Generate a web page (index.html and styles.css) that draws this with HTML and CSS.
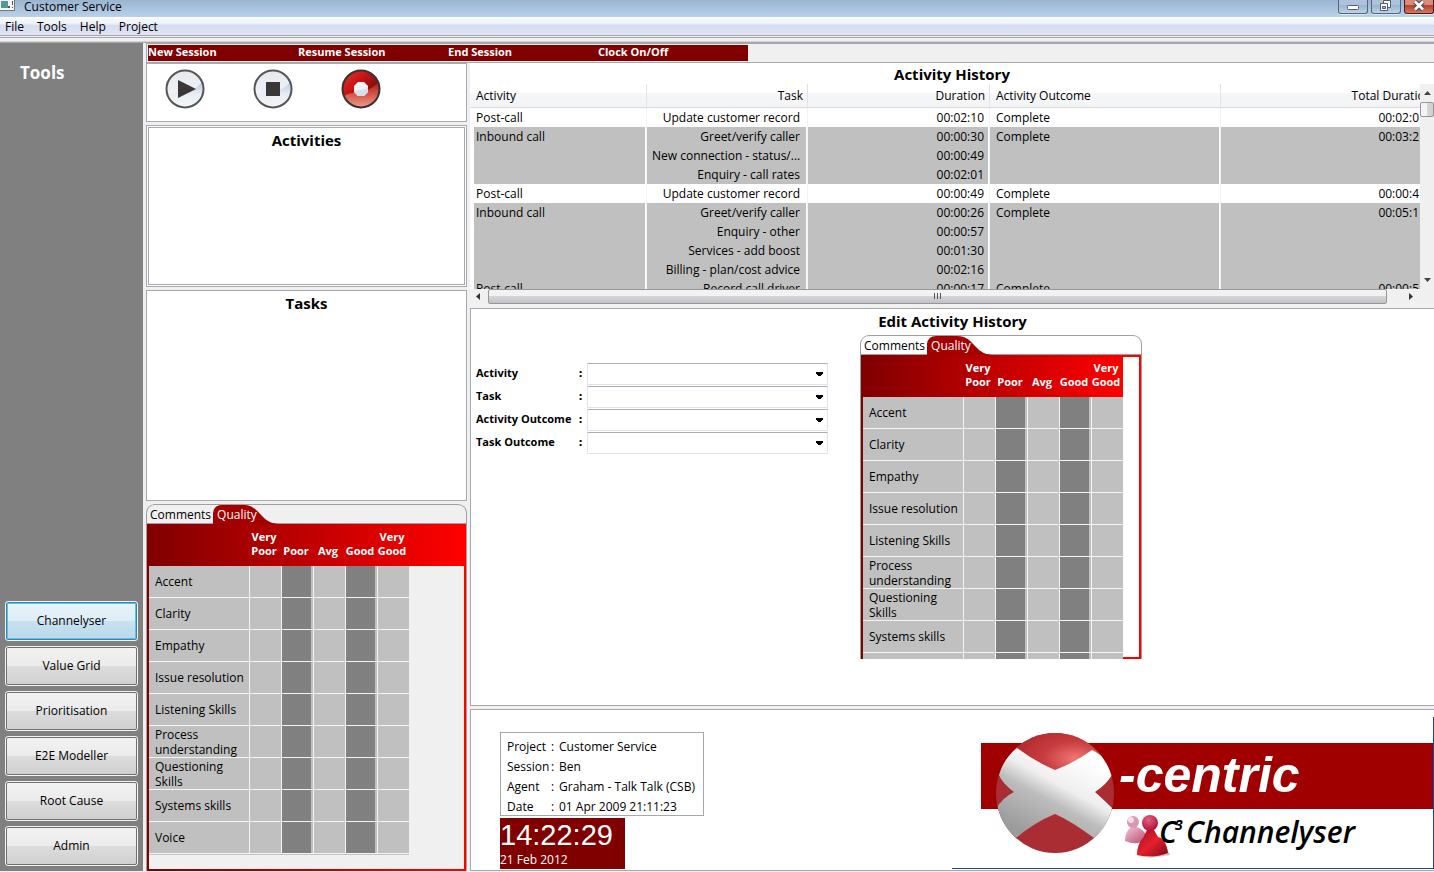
FILE: index.html
```html
<!DOCTYPE html>
<html lang="en">
<head>
<meta charset="utf-8">
<title>Customer Service</title>
<link rel="stylesheet" href="styles.css">
</head>
<body>
<header class="titlebar">
  <svg class="app-icon" width="15" height="12" viewBox="0 0 15 12" aria-hidden="true">
    <path d="M0 0h15v11H0z" fill="#777"/><path d="M0 0h14v10H0z" fill="#f4f4f4"/>
    <path d="M1 1h7v7H1z" fill="#5595a8"/><path d="M2 4h5v4H2z" fill="#4fa080"/>
    <path d="M8 6h2v2H8zM12 1h1v4h-1zM12 7h1v1h-1z" fill="#555"/>
  </svg>
  <span class="title">Customer Service</span>
  <div class="window-buttons">
    <button class="win-btn" aria-label="Minimise"><svg width="30" height="14" viewBox="0 0 30 14"><rect x="9.500" y="5.500" width="11" height="4" rx="1" fill="#fff" stroke="#555b6b"/></svg></button>
    <button class="win-btn" aria-label="Restore"><svg width="30" height="14" viewBox="0 0 30 14"><path d="M12.500 .5h7v7h-7z" fill="#fff" stroke="#555b6b"/><path d="M9.500 3.500h7v7h-7z" fill="#fff" stroke="#555b6b"/><path d="M11.500 6.500h3v2h-3z" fill="#9fb9d3" stroke="#555b6b"/></svg></button>
    <button class="win-btn close" aria-label="Close"><svg width="30" height="14" viewBox="0 0 30 14"><path d="M11 1.500l8 8M19 1.500l-8 8" stroke="#4d4a5c" stroke-width="5"/><path d="M11 1.500l8 8M19 1.500l-8 8" stroke="#fff" stroke-width="2.600"/></svg></button>
  </div>
</header>
<nav class="menubar">
  <button>File</button><button>Tools</button><button>Help</button><button>Project</button>
</nav>
<div class="divider"></div>
<div class="workspace">
  <aside class="sidebar">
    <h2>Tools</h2>
    <div class="tool-buttons">
      <button class="active">Channelyser</button>
      <button>Value Grid</button>
      <button>Prioritisation</button>
      <button>E2E Modeller</button>
      <button>Root Cause</button>
      <button>Admin</button>
    </div>
  </aside>
  <main>
    <div class="session-bar">
      <div class="session-labels"><span>New Session</span><span>Resume Session</span><span>End Session</span><span>Clock On/Off</span></div>
    </div>
    <div class="columns">
      <div class="left">
        <section class="panel controls">
          <button aria-label="Play"><svg width="40" height="40" viewBox="0 0 40 40">
            <defs><linearGradient id="glass" x1="0" y1="0" x2="0" y2="1"><stop offset="0" stop-color="#e6e9ed"/><stop offset="1" stop-color="#f3f6f9"/></linearGradient>
            <linearGradient id="shade" x1="0" y1="0" x2="0" y2="1"><stop offset="0" stop-color="#b9cbdc"/><stop offset=".5" stop-color="#e8eef4"/><stop offset="1" stop-color="#f2f6f9"/></linearGradient></defs>
            <circle cx="20" cy="20" r="18.500" fill="url(#glass)"/>
            <path d="M3 27C12 21 28 26 37 13A18 18 0 0 1 22 38C12 38 5 34 3 27z" fill="url(#shade)"/>
            <circle cx="20" cy="20" r="18.500" fill="none" stroke="#555" stroke-width="2"/>
            <path d="M13 11v18l18-9z" fill="#3a3737"/></svg></button>
          <button aria-label="Stop"><svg width="40" height="40" viewBox="0 0 40 40">
            <circle cx="20" cy="20" r="18.500" fill="url(#glass)"/>
            <path d="M3 27C12 21 28 26 37 13A18 18 0 0 1 22 38C12 38 5 34 3 27z" fill="url(#shade)"/>
            <circle cx="20" cy="20" r="18.500" fill="none" stroke="#555" stroke-width="2"/>
            <path d="M13 13h14v14H13z" fill="#3a3737"/></svg></button>
          <button aria-label="Clock on or off"><svg width="40" height="40" viewBox="0 0 40 40">
            <defs><linearGradient id="red" x1="0" y1="0" x2="1" y2="1"><stop offset="0" stop-color="#dc3a34"/><stop offset=".35" stop-color="#c91414"/><stop offset=".7" stop-color="#7d0d0d"/></linearGradient>
            <linearGradient id="redlow" x1="0" y1="0" x2="0" y2="1"><stop offset="0" stop-color="#b51512"/><stop offset="1" stop-color="#f09a84"/></linearGradient></defs>
            <circle cx="20" cy="20" r="18.500" fill="url(#red)"/>
            <path d="M3 27C12 21 28 26 37 13A18 18 0 0 1 22 38C12 38 5 34 3 27z" fill="url(#redlow)"/>
            <circle cx="20" cy="20" r="18.500" fill="none" stroke="#333" stroke-width="2"/>
            <path d="M17 13h6l4 4v6l-4 4h-6l-4-4v-6z" fill="#f1f3f6"/><path d="M13 22c5-1 10 0 14-4v5l-4 4h-6l-4-4z" fill="#d5dfe9"/></svg></button>
        </section>
        <section class="panel activities"><h3>Activities</h3></section>
        <section class="panel tasks"><h3>Tasks</h3></section>
        <section class="quality session-quality">
          <div class="tabs" role="tablist">
            <svg class="tab-shape" width="70" height="19" viewBox="0 0 70 19" aria-hidden="true"><path d="M0 19V8Q1 0 9 0H30C48 0 46 18 66 19z" fill="#a40000"/></svg>
            <button role="tab" aria-selected="false">Comments</button><button role="tab" aria-selected="true" class="current">Quality</button>
          </div>
          <div class="frame"><div class="frame-inner">
            <table class="ratings">
              <thead><tr><th aria-label="Skill"></th><th>Very<br>Poor</th><th>Poor</th><th>Avg</th><th>Good</th><th>Very<br>Good</th></tr></thead>
              <tbody>
                <tr><th>Accent</th><td></td><td></td><td></td><td></td><td></td></tr>
                <tr><th>Clarity</th><td></td><td></td><td></td><td></td><td></td></tr>
                <tr><th>Empathy</th><td></td><td></td><td></td><td></td><td></td></tr>
                <tr><th>Issue resolution</th><td></td><td></td><td></td><td></td><td></td></tr>
                <tr><th>Listening Skills</th><td></td><td></td><td></td><td></td><td></td></tr>
                <tr><th>Process understanding</th><td></td><td></td><td></td><td></td><td></td></tr>
                <tr><th>Questioning Skills</th><td></td><td></td><td></td><td></td><td></td></tr>
                <tr><th>Systems skills</th><td></td><td></td><td></td><td></td><td></td></tr>
                <tr><th>Voice</th><td></td><td></td><td></td><td></td><td></td></tr>
              </tbody>
            </table>
          </div></div>
        </section>
      </div>
      <div class="right">
        <section class="history">
          <h3>Activity History</h3>
          <div class="grid-area">
            <div class="grid-view">
              <table class="log">
                <colgroup><col class="c-activity"><col class="c-task"><col class="c-duration"><col class="c-outcome"><col class="c-total"></colgroup>
                <thead><tr><th>Activity</th><th>Task</th><th>Duration</th><th>Activity Outcome</th><th>Total Duration</th></tr></thead>
                <tbody>
                  <tr><td>Post-call</td><td>Update customer record</td><td>00:02:10</td><td>Complete</td><td>00:02:0</td></tr>
                  <tr class="alt"><td>Inbound call</td><td>Greet/verify caller</td><td>00:00:30</td><td>Complete</td><td>00:03:2</td></tr>
                  <tr class="alt"><td></td><td>New connection - status/...</td><td>00:00:49</td><td></td><td></td></tr>
                  <tr class="alt"><td></td><td>Enquiry - call rates</td><td>00:02:01</td><td></td><td></td></tr>
                  <tr><td>Post-call</td><td>Update customer record</td><td>00:00:49</td><td>Complete</td><td>00:00:4</td></tr>
                  <tr class="alt"><td>Inbound call</td><td>Greet/verify caller</td><td>00:00:26</td><td>Complete</td><td>00:05:1</td></tr>
                  <tr class="alt"><td></td><td>Enquiry - other</td><td>00:00:57</td><td></td><td></td></tr>
                  <tr class="alt"><td></td><td>Services - add boost</td><td>00:01:30</td><td></td><td></td></tr>
                  <tr class="alt"><td></td><td>Billing - plan/cost advice</td><td>00:02:16</td><td></td><td></td></tr>
                  <tr class="alt"><td>Post-call</td><td>Record call driver</td><td>00:00:17</td><td>Complete</td><td>00:00:5</td></tr>
                </tbody>
              </table>
            </div>
            <div class="vscroll">
              <svg width="14" height="18" viewBox="0 0 14 18"><path d="M4 11l3.500-4 3.500 4z" fill="#444"/></svg>
              <div class="vthumb"></div>
              <svg class="down" width="14" height="18" viewBox="0 0 14 18"><path d="M4 7l3.500 4L11 7z" fill="#444"/></svg>
            </div>
          </div>
          <div class="hscroll">
            <svg width="18" height="15" viewBox="0 0 18 15"><path d="M10 4v7L6 7.500z" fill="#333"/></svg>
            <div class="hthumb"><i></i><i></i><i></i></div>
            <svg class="end" width="47" height="15" viewBox="0 0 47 15"><path d="M22 4v7l4-3.500z" fill="#333"/></svg>
          </div>
        </section>
        <section class="edit">
          <h3>Edit Activity History</h3>
          <div class="edit-body">
            <form class="fields">
              <label for="activity">Activity</label><b>:</b><select id="activity"><option></option></select>
              <label for="task">Task</label><b>:</b><select id="task"><option></option></select>
              <label for="activity-outcome">Activity Outcome</label><b>:</b><select id="activity-outcome"><option></option></select>
              <label for="task-outcome">Task Outcome</label><b>:</b><select id="task-outcome"><option></option></select>
            </form>
            <div class="quality edit-quality">
              <div class="tabs" role="tablist">
                <svg class="tab-shape" width="70" height="19" viewBox="0 0 70 19" aria-hidden="true"><path d="M0 19V8Q1 0 9 0H30C48 0 46 18 66 19z" fill="#a40000"/></svg>
                <button type="button" role="tab" aria-selected="false">Comments</button><button type="button" role="tab" aria-selected="true" class="current">Quality</button>
              </div>
              <div class="frame"><div class="frame-inner">
                <table class="ratings">
                  <thead><tr><th aria-label="Skill"></th><th>Very<br>Poor</th><th>Poor</th><th>Avg</th><th>Good</th><th>Very<br>Good</th></tr></thead>
                  <tbody>
                    <tr><th>Accent</th><td></td><td></td><td></td><td></td><td></td></tr>
                    <tr><th>Clarity</th><td></td><td></td><td></td><td></td><td></td></tr>
                    <tr><th>Empathy</th><td></td><td></td><td></td><td></td><td></td></tr>
                    <tr><th>Issue resolution</th><td></td><td></td><td></td><td></td><td></td></tr>
                    <tr><th>Listening Skills</th><td></td><td></td><td></td><td></td><td></td></tr>
                    <tr><th>Process understanding</th><td></td><td></td><td></td><td></td><td></td></tr>
                    <tr><th>Questioning Skills</th><td></td><td></td><td></td><td></td><td></td></tr>
                    <tr><th>Systems skills</th><td></td><td></td><td></td><td></td><td></td></tr>
                    <tr><th></th><td></td><td></td><td></td><td></td><td></td></tr>
                  </tbody>
                </table>
              </div></div>
            </div>
          </div>
        </section>
        <section class="status">
          <div class="status-info">
            <dl class="info">
              <dt>Project</dt><dd>:</dd><dd>Customer Service</dd>
              <dt>Session</dt><dd>:</dd><dd>Ben</dd>
              <dt>Agent</dt><dd>:</dd><dd>Graham - Talk Talk (CSB)</dd>
              <dt>Date</dt><dd>:</dd><dd>01 Apr 2009 21:11:23</dd>
            </dl>
            <div class="clock"><time class="now">14:22:29</time><span>21 Feb 2012</span></div>
          </div>
          <svg class="logo" width="482" height="152" viewBox="0 0 482 152" role="img" aria-label="X-centric C3 Channelyser">
            <defs>
              <clipPath id="ball"><ellipse cx="103" cy="76" rx="59" ry="60"/></clipPath>
              <linearGradient id="cross" x1=".2" y1=".9" x2=".75" y2=".1"><stop offset="0" stop-color="#9c9c9c"/><stop offset=".42" stop-color="#bdbdbd"/><stop offset=".62" stop-color="#efefef"/><stop offset="1" stop-color="#fff"/></linearGradient>
              <radialGradient id="top" cx=".7" cy=".65" r=".7"><stop offset="0" stop-color="#f07772"/><stop offset=".5" stop-color="#c83c40"/><stop offset="1" stop-color="#b02a30"/></radialGradient>
              <linearGradient id="p1" x1="0" y1="0" x2="1" y2="1"><stop offset="0" stop-color="#f4c6d6"/><stop offset="1" stop-color="#b4446b"/></linearGradient>
              <linearGradient id="p2" x1="0" y1="0" x2="1" y2="1"><stop offset="0" stop-color="#a30d2c"/><stop offset=".5" stop-color="#e5202b"/><stop offset="1" stop-color="#7c0618"/></linearGradient>
              <radialGradient id="head" cx=".4" cy=".3" r=".8"><stop offset="0" stop-color="#e45f83"/><stop offset="1" stop-color="#a60a2e"/></radialGradient>
            </defs>
            <path d="M29 26h453v66H29z" fill="#a00000"/>
            <g clip-path="url(#ball)">
              <path d="M40 10h130v130H40z" fill="#a92d33"/>
              <path d="M60 10h90v48H60z" fill="url(#top)"/>
              <path d="M65 31Q84 45 103 53Q124 45 140 33Q156 40 160 58Q154 68 143 75Q153 84 160 91Q158 111 142 121Q119 104 103 97Q83 105 64 121Q46 112 44 92Q50 81 62 75Q50 66 47 58Q51 42 65 31z" fill="url(#cross)"/>
            </g>
            <text class="logo-brand" x="167" y="75">-centric</text>
            <g>
              <path d="M173 124c0-6 2-11 6-14h5c6 1 10 6 12 13l-10 3q-6 1-13-2z" fill="url(#p1)"/><circle cx="181" cy="105" r="6" fill="#d998b2"/><circle cx="179" cy="103" r="3" fill="#f7dde6"/>
              <path d="M196 141l22-3-3-6z" fill="#d9b4b4"/>
              <path d="M185 138c0-8 3-14 6-17l4-8h7l4 7c6 1 9 8 10 16q-16 6-31 2z" fill="url(#p2)"/><circle cx="198" cy="106" r="8" fill="url(#head)"/>
            </g>
            <text class="logo-product" x="207" y="126">C</text>
            <text class="logo-super" x="223" y="113">3</text>
            <text class="logo-product" x="234" y="126">Channelyser</text>
            <path d="M0 151.500H482M481.500 0v152" stroke="#1647a0" fill="none"/>
          </svg>
        </section>
      </div>
    </div>
  </main>
</div>
</body>
</html>
```
FILE: styles.css
```css
* { box-sizing: border-box; }
body {
  margin: 0; height: 100vh; display: flex; flex-direction: column; padding-bottom: 1px;
  background: #f0f0f0; color: #000; overflow: hidden;
  font: 12px/15px "Open Sans", "Noto Sans", sans-serif;
}
button { font: inherit; color: inherit; border: 0; background: none; padding: 0; margin: 0; }
h2, h3 { margin: 0; }
svg { display: block; flex: none; }

.titlebar { height: 17px; flex: none; display: flex; align-items: flex-start; background: linear-gradient(#9ab5d1, #b9d1ea); }
.title { margin-left: 9px; line-height: 13px; flex: 1; }
.window-buttons { display: flex; gap: 3px; }
.win-btn { width: 30px; height: 14px; border: 1px solid #53657d; border-top: 0; border-radius: 0 0 3px 3px; background: linear-gradient(#adc3dc 40%, #98b4d0 40%, #bcd2e8); box-shadow: 0 1px 0 #dce8f4; overflow: hidden; }
.win-btn svg { margin-left: -1px; }
.win-btn.close { background: linear-gradient(#d98c7c 40%, #b8402a 40%, #d4775c); border-color: #4c1b17; }

.menubar { height: 18px; flex: none; display: flex; gap: 13px; padding: 0 5px; background: linear-gradient(#fdfdff, #eceffa 40%, #d5dcef 45%, #e0e5f5); }
.divider { height: 8px; flex: none; border-top: 1px solid #a5a8ad; border-bottom: 1px solid #a5a8ad; background: linear-gradient(#f0f0f0 1px, #a5a8ad 1px, #a5a8ad 2px, #f0f0f0 2px, #f0f0f0 5px, #a5a8ad 5px, #fff 6px); }

.workspace { flex: 1; min-height: 0; display: flex; }
.sidebar { width: 143px; flex: none; background: #808080; display: flex; flex-direction: column; justify-content: space-between; padding: 20px 5px 5px; }
.sidebar h2 { color: #fff; font-size: 17px; line-height: 20px; padding-left: 15px; }
.tool-buttons { display: flex; flex-direction: column; gap: 5px; width: 133px; }
.tool-buttons button { height: 40px; padding-bottom: 2px; border: 1px solid #f4f4f4; outline: 1px solid #707070; outline-offset: -2px; border-radius: 3px; background: linear-gradient(#f2f2f2, #ebebeb 50%, #dddddd 50%, #cfcfcf); }
.tool-buttons .active { outline: 0; background: linear-gradient(#eaf4fb, #dcedf6 50%, #c8e1ee 50%, #b9d9e9); box-shadow: inset 0 0 0 1px #3c7fb1, inset 0 0 0 2px #48c8f4; }

main { flex: 1; min-width: 0; padding-left: 3px; display: flex; flex-direction: column; }
.session-bar { height: 20px; flex: none; border: 1px solid #a5a8ad; border-right: 0; padding: 1px; }
.session-labels { width: 600px; height: 16px; background: #800000; color: #fff; font-weight: 700; font-size: 11px; line-height: 14px; display: grid; grid-template-columns: repeat(4, 1fr); }
.columns { flex: 1; min-height: 0; display: flex; gap: 3px; }
.left { width: 321px; flex: none; display: flex; flex-direction: column; gap: 3px; }
.right { flex: 1; min-width: 0; display: flex; flex-direction: column; gap: 3px; }
.panel { background: #fff; border: 1px solid #a5a8ad; flex: none; }
h3 { text-align: center; font-size: 15px; line-height: 20px; }
.controls { height: 59px; display: flex; gap: 48px; padding: 5px 18px; align-items: flex-start; }
.activities { height: 162px; border: 3px double #a5a8ad; padding-top: 2px; }
.tasks { height: 211px; padding-top: 2px; }

.quality { display: flex; flex-direction: column; border: 1px solid #a0a0a0; border-bottom: 0; border-radius: 9px 9px 0 0; min-height: 0; }
.session-quality { flex: 1; }
.tabs { height: 19px; flex: none; display: flex; gap: 6px; padding-left: 3px; position: relative; border-bottom: 1px solid #a0a0a0; }
.tab-shape { position: absolute; left: 66px; top: 0; }
.tabs button { position: relative; line-height: 19px; height: 19px; }
.tabs .current { color: #fff; }
.frame { flex: 1; min-height: 0; padding: 2px; background: linear-gradient(90deg, #800000, #f00); display: flex; overflow: hidden; }
.frame-inner { flex: 1; min-width: 0; background: linear-gradient(90deg, #800000, #f00) 0 0 / 100% 40px no-repeat #f0f0f0; }
.ratings { width: 260px; table-layout: fixed; border-collapse: separate; border-spacing: 0; border-bottom: 1px solid #c0c0c0; }
.ratings thead th { height: 40px; padding: 0 2px 8px 0; vertical-align: bottom; color: #fff; font-size: 11px; line-height: 14px; width: 32px; white-space: nowrap; }
.ratings thead th:first-child { width: 100px; }
.ratings tbody th { height: 32px; padding: 0 5px 0 6px; text-align: left; font-weight: 400; line-height: 15px; background: #c0c0c0; border-bottom: 1px solid #f4f4f4; }
.ratings td { padding: 0; background: #c0c0c0; border-left: 1px solid #f4f4f4; border-bottom: 1px solid #f4f4f4; }
.ratings td:nth-child(odd) { background: linear-gradient(90deg, #808080 29px, #c0c0c0 29px); }

.history { height: 242px; flex: none; background: #fff; display: flex; flex-direction: column; padding-top: 1px; }
.history h3 { height: 20px; }
.grid-area { flex: 1; min-height: 0; display: flex; }
.grid-view { flex: 1; min-width: 0; overflow: hidden; }
.log { width: 100%; min-width: 967px; table-layout: fixed; border-collapse: separate; border-spacing: 0; }
.c-activity { width: 177px; } .c-task { width: 161px; } .c-duration { width: 182px; } .c-outcome { width: 231px; } .c-total { width: 216px; }
.log th { height: 24px; padding: 0 4px 0 6px; font-weight: 400; text-align: right; background: linear-gradient(#fff 40%, #f5f6f8 40%, #f2f4f6); border-right: 1px solid #e2e4e8; border-bottom: 1px solid #d8d9db; }
.log td { height: 19px; padding: 0 5px 0 5px; text-align: right; white-space: nowrap; line-height: 18px; border-right: 1px solid #edf4fd; background-clip: padding-box; }
.log th:first-child, .log td:first-child, .log th:nth-child(4), .log td:nth-child(4) { text-align: left; }
.log td:first-child, .log td:nth-child(4) { padding-left: 6px; }
.log td:last-child { padding-right: 17px; }
.log .alt td { background-color: #c0c0c0; box-shadow: inset -1px 0 #fff; }
.log .alt td:first-child { box-shadow: inset 4px 0 #fff, inset -1px 0 #fff; }
.log td:nth-child(2) { padding-right: 7px; }
.vscroll { width: 14px; flex: none; background: #f0f0f0; display: flex; flex-direction: column; }
.vthumb { height: 15px; border: 1px solid #979797; border-radius: 2px; background: linear-gradient(90deg, #f4f4f4 50%, #d8d8d8 50%, #cfcfcf); }
.down { margin-top: auto; }
.hscroll { height: 16px; flex: none; background: #f0f0f0; display: flex; }
.hthumb { flex: 1; height: 15px; border: 1px solid #979797; border-radius: 2px; background: linear-gradient(#f2f2f2 50%, #d5d5d8 50%, #c2c2c6); display: flex; justify-content: center; gap: 2px; padding-top: 3px; }
.hthumb i { width: 1px; height: 6px; background: #555; }

.edit { flex: 1; min-height: 0; background: #fff; border: 1px solid #a5a8ad; border-right: 0; padding-top: 2px; }
.edit h3 { height: 24px; }
.edit-body { display: flex; gap: 32px; padding-left: 5px; align-items: flex-start; }
.fields { width: 352px; flex: none; margin-top: 28px; display: grid; grid-template-columns: 103px 8px 1fr; row-gap: 1px; align-items: center; font-size: 11px; font-weight: 700; line-height: 14px; }
.fields label, .fields b { white-space: nowrap; padding-bottom: 2px; }
.fields select {
  height: 22px; border: 1px solid #e2e3ea; border-top-color: #abadb3; border-radius: 1px; appearance: none;
  background:
    linear-gradient(#000, #000) right 4px top 8px / 7px 1px no-repeat,
    linear-gradient(#000, #000) right 4px top 9px / 7px 1px no-repeat,
    linear-gradient(#000, #000) right 5px top 10px / 5px 1px no-repeat,
    linear-gradient(#000, #000) right 6px top 11px / 3px 1px no-repeat,
    #fff;
}
.edit-quality { width: 282px; height: 324px; flex: none; }
.edit-quality .frame-inner { background-color: #fff; background-size: 260px 40px; }

.status { height: 162px; flex: none; background: #fff; border: 1px solid #a5a8ad; border-right: 0; display: flex; justify-content: space-between; padding: 7px 0 0 29px; }
.status-info { padding-top: 15px; display: flex; flex-direction: column; gap: 2px; }
.info { margin: 0; width: 204px; height: 84px; border: 1px solid #a5a8ad; padding: 4px 6px 0; display: grid; grid-template-columns: 44px 8px 1fr; grid-auto-rows: 20px; line-height: 20px; white-space: nowrap; }
.info dd { margin: 0; }
.clock { width: 125px; height: 51px; background: #800000; color: #fff; display: flex; flex-direction: column; }
.now { font: 29px/34px "Liberation Sans", Arial, sans-serif; }
.logo-brand { font: italic 700 50px "Liberation Sans", Arial, sans-serif; fill: #fff; }
.logo-product { font: italic 600 30px "Open Sans", "Noto Sans", sans-serif; }
.logo-super { font: italic 700 14px "Open Sans", "Noto Sans", sans-serif; }
```
